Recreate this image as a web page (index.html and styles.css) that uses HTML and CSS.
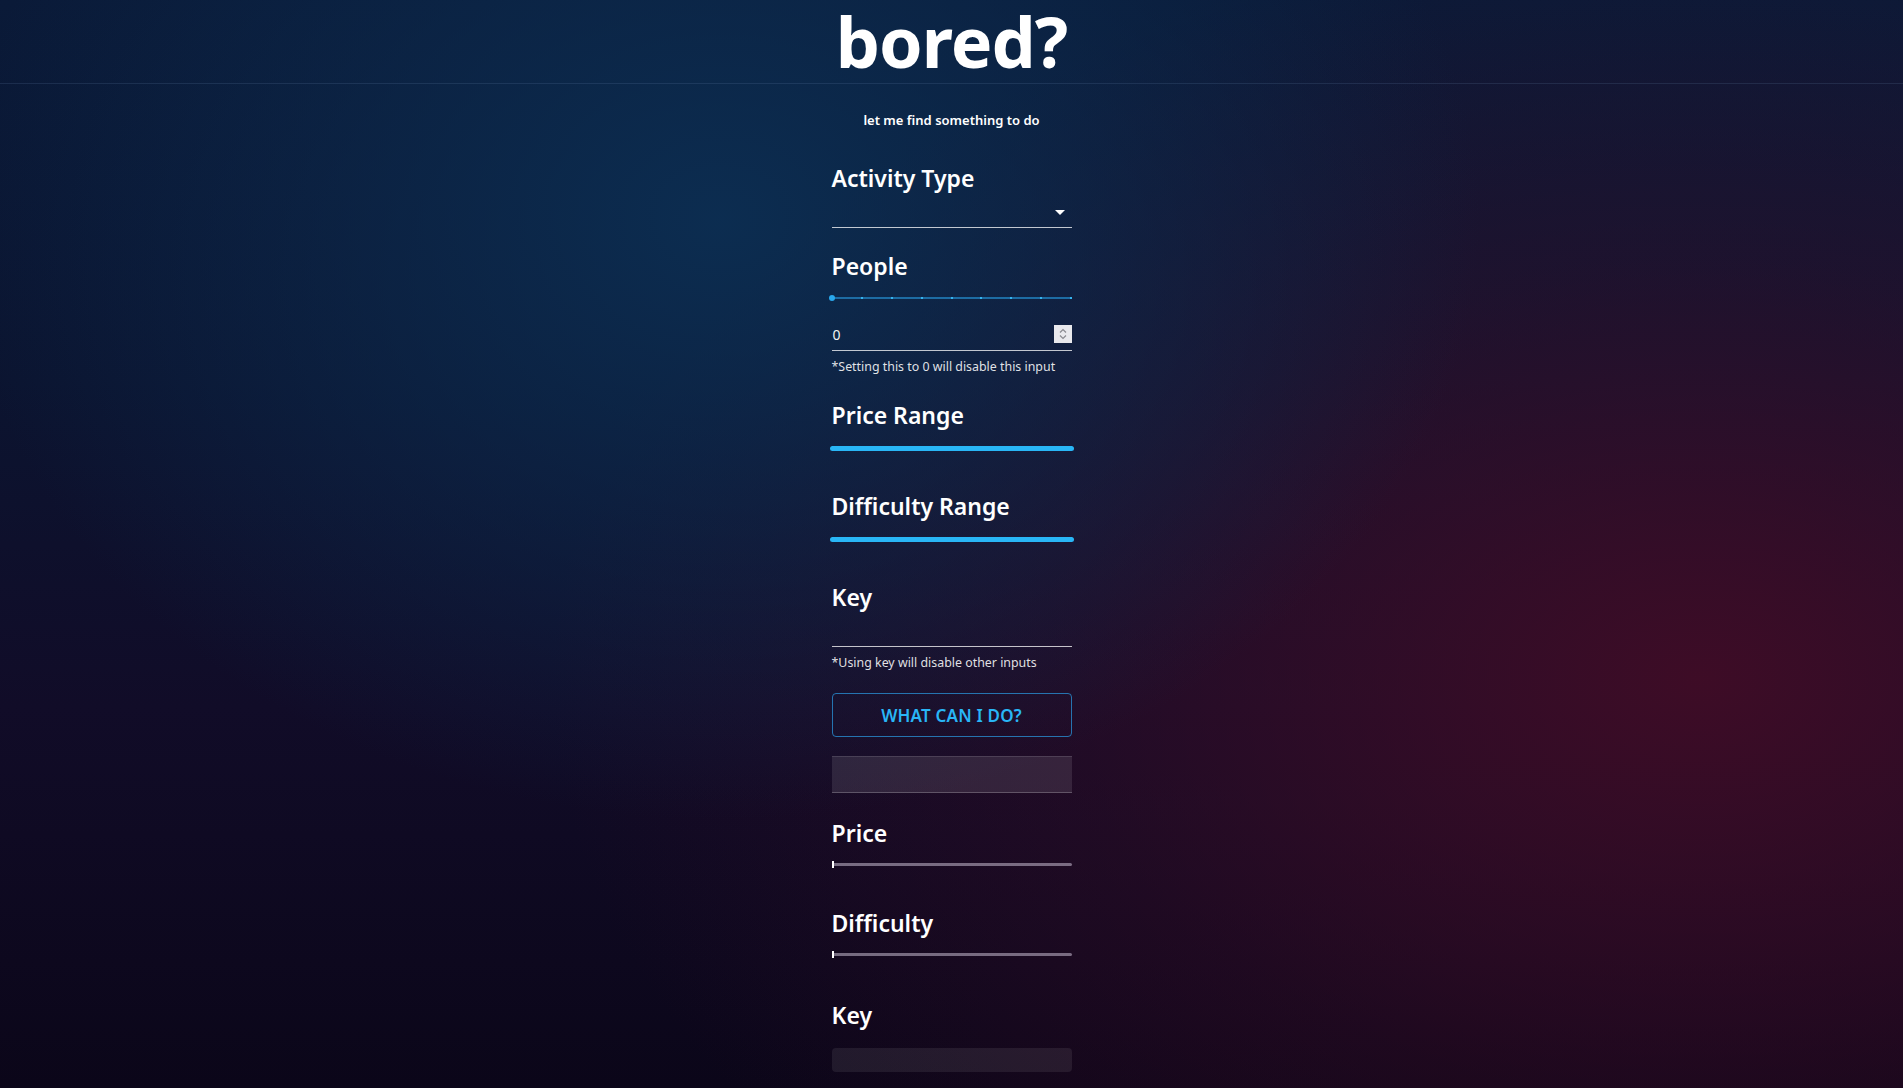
FILE: index.html
```html
<!DOCTYPE html>
<html lang="en">
<head>
<meta charset="utf-8">
<title>bored?</title>
<link rel="stylesheet" href="styles.css">
</head>
<body>
<header class="header">
  <h1 class="title">bored?</h1>
</header>
<main class="form">
  <p class="subtitle">let me find something to do</p>

  <h2 class="label label-first">Activity Type</h2>
  <div class="select">
    <svg class="select-arrow" width="10" height="5" viewBox="0 0 10 5"><path d="M0 0h10L5 5z" fill="#fff"/></svg>
  </div>

  <h2 class="label">People</h2>
  <div class="slider-people">
    <div class="track-people">
      <span class="tick"></span><span class="tick"></span><span class="tick"></span><span class="tick"></span><span class="tick"></span><span class="tick"></span><span class="tick"></span><span class="tick"></span><span class="tick"></span>
      <span class="thumb-people"></span>
    </div>
  </div>
  <div class="number">
    <span class="number-value">0</span>
    <span class="spinner">
      <svg width="18" height="18" viewBox="0 0 18 18"><path d="M6 7.5l3-3 3 3M6 10.5l3 3 3-3" fill="none" stroke="#8a8a90" stroke-width="1.2"/></svg>
    </span>
  </div>
  <p class="helper">*Setting this to 0 will disable this input</p>

  <h2 class="label label-range">Price Range</h2>
  <div class="range"><div class="range-bar"></div></div>

  <h2 class="label label-range2">Difficulty Range</h2>
  <div class="range"><div class="range-bar"></div></div>

  <h2 class="label label-key">Key</h2>
  <div class="key-input"></div>
  <p class="helper">*Using key will disable other inputs</p>

  <button class="go">WHAT CAN I DO?</button>

  <div class="result"></div>

  <h2 class="label label-out">Price</h2>
  <div class="meter"><div class="meter-track"><span class="meter-thumb"></span></div></div>

  <h2 class="label label-out2">Difficulty</h2>
  <div class="meter"><div class="meter-track"><span class="meter-thumb"></span></div></div>

  <h2 class="label label-out3">Key</h2>
  <div class="key-box"></div>
</main>
</body>
</html>
```
FILE: styles.css
```css
html, body {
  margin: 0;
  padding: 0;
}
body {
  min-height: 100vh;
  font-family: "Noto Sans", "Open Sans", sans-serif;
  color: #fff;
  background-color: #0b0b22;
  background-image:
    radial-gradient(ellipse 760px 600px at 720px 220px, rgba(12, 46, 82, 0.95), rgba(12, 46, 82, 0) 100%),
    radial-gradient(ellipse 1150px 760px at 1700px 680px, rgba(64, 12, 38, 0.95), rgba(64, 12, 38, 0.35) 55%, rgba(64, 12, 38, 0) 100%),
    linear-gradient(180deg, #0a1a38 0%, #0b1430 35%, #110c28 65%, #0b0619 100%);
  background-attachment: fixed;
}
.header {
  height: 84px;
  border-bottom: 1px solid rgba(120, 150, 190, 0.16);
  text-align: center;
  box-sizing: border-box;
}
.title {
  margin: 0;
  font-size: 70px;
  line-height: 83px;
  font-weight: 700;
  letter-spacing: -1px;
}
.form {
  width: 240px;
  margin: 0 auto;
  display: flex;
  flex-direction: column;
}
.subtitle {
  margin: 26px 0 0;
  text-align: center;
  font-size: 13px;
  line-height: 20px;
  font-weight: 600;
}
.label {
  margin: 22px 0 0;
  font-size: 23px;
  line-height: 32px;
  font-weight: 600;
}
.label-first { margin-top: 32px; }
.label-range { margin-top: 24px; }
.label-range2 { margin-top: 24px; }
.label-key { margin-top: 24px; }
.label-out { margin-top: 24px; }
.label-out2 { margin-top: 28px; }
.label-out3 { margin-top: 30px; }

.select {
  height: 34px;
  border-bottom: 1px solid rgba(255, 255, 255, 0.75);
  box-sizing: border-box;
  display: flex;
  justify-content: flex-end;
  align-items: center;
  padding: 3px 7px 0 0;
}
.slider-people {
  height: 30px;
  margin-top: 1px;
  display: flex;
  align-items: center;
}
.track-people {
  position: relative;
  width: 100%;
  height: 2px;
  background: #1d6ca3;
  display: flex;
  justify-content: space-between;
  align-items: center;
}
.tick {
  width: 2px;
  height: 2px;
  background: #35b3ef;
}
.thumb-people {
  position: absolute;
  left: -3px;
  top: -2px;
  width: 6px;
  height: 6px;
  border-radius: 50%;
  background: #29a8ec;
}
.number {
  height: 35px;
  margin-top: 3px;
  border-bottom: 1px solid rgba(255, 255, 255, 0.75);
  box-sizing: border-box;
  display: flex;
  align-items: center;
  justify-content: space-between;
  padding-top: 2px;
}
.number-value {
  font-size: 14px;
  padding-left: 1px;
  color: #f2f2f2;
}
.spinner {
  width: 18px;
  height: 18px;
  background: #e9e9ed;
  display: flex;
}
.helper {
  margin: 8px 0 0;
  font-size: 12.4px;
  line-height: 16px;
  color: rgba(255, 255, 255, 0.88);
}
.range {
  height: 35px;
  padding-top: 15px;
  box-sizing: border-box;
}
.range-bar {
  height: 5px;
  margin: 0 -2px;
  border-radius: 3px;
  background: #29b6f6;
}
.key-input {
  height: 34px;
  border-bottom: 1px solid rgba(255, 255, 255, 0.75);
  box-sizing: border-box;
}
.go {
  margin-top: 22px;
  height: 44px;
  border: 1px solid rgba(41, 150, 220, 0.75);
  border-radius: 4px;
  background: transparent;
  color: #29b6f6;
  font-family: "Noto Sans", "Open Sans", sans-serif;
  font-size: 17px;
  font-weight: 600;
  letter-spacing: 0.2px;
  cursor: pointer;
}
.result {
  margin-top: 19px;
  height: 37px;
  background: rgba(255, 255, 255, 0.1);
  border-top: 1px solid rgba(255, 255, 255, 0.12);
  border-bottom: 1px solid rgba(255, 255, 255, 0.22);
  box-sizing: border-box;
}
.meter {
  height: 30px;
  display: flex;
  align-items: center;
}
.meter-track {
  position: relative;
  width: 100%;
  height: 3px;
  background: rgba(215, 205, 225, 0.5);
  border-radius: 2px;
}
.meter-thumb {
  position: absolute;
  left: 0;
  top: -2px;
  width: 2px;
  height: 7px;
  background: #fff;
}
.key-box {
  margin-top: 17px;
  height: 24px;
  border-radius: 4px;
  background: rgba(255, 255, 255, 0.08);
}
```
